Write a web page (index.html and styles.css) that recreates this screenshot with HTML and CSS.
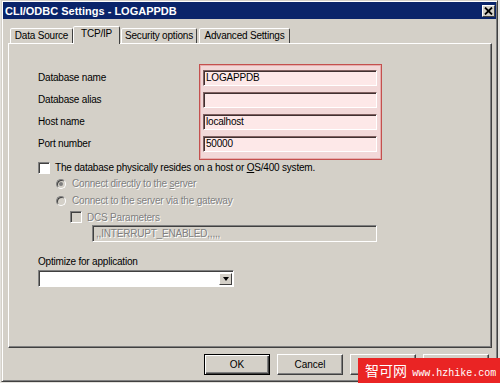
FILE: index.html
```html
<!DOCTYPE html>
<html lang="en">
<head>
  <meta charset="UTF-8" />
  <title>CLI/ODBC Settings - LOGAPPDB</title>
  <link rel="stylesheet" href="styles.css">
</head>
<body>
  <div class="window">
    <div class="titlebar">
      <span class="title">CLI/ODBC Settings - LOGAPPDB</span>
      <span class="close">
        <svg width="9" height="8" viewBox="0 0 9 8"><path d="M1 0.5 L8 7.5 M8 0.5 L1 7.5" stroke="#000" stroke-width="1.8"/></svg>
      </span>
    </div>

    <div class="tabs">
      <div class="tab tab-data">Data Source</div>
      <div class="tab active">TCP/IP</div>
      <div class="tab tab-sec">Security options</div>
      <div class="tab tab-adv">Advanced Settings</div>
    </div>

    <div class="panel">
      <div class="conn">
        <div class="labels">
          <div>Database name</div>
          <div>Database alias</div>
          <div>Host name</div>
          <div>Port number</div>
        </div>
        <div class="fields">
          <div class="field">LOGAPPDB</div>
          <div class="field"></div>
          <div class="field">localhost</div>
          <div class="field">50000</div>
        </div>
      </div>

      <div class="row row-host">
        <span class="check"></span>
        <span>The database physically resides on a host or <u>O</u>S/400 system.</span>
      </div>
      <div class="row row-radio disabled">
        <span class="radio on"></span>
        <span>Connect directly to the <u>s</u>erver</span>
      </div>
      <div class="row row-radio disabled">
        <span class="radio"></span>
        <span>Connect to the server via the <u>g</u>ateway</span>
      </div>
      <div class="row row-dcs disabled">
        <span class="check off"></span>
        <span>DCS Parameters</span>
      </div>
      <div class="dcs">,,INTERRUPT_ENABLED,,,,,</div>

      <div class="opt-label">Optimize for application</div>
      <div class="select"><span class="drop"><span class="arrow"></span></span></div>
    </div>

    <div class="buttons">
      <button class="btn default">OK</button>
      <button class="btn">Cancel</button>
      <button class="btn"></button>
      <button class="btn"></button>
    </div>
  </div>

  <div class="watermark">智可网 <span class="site">www.hzhike.com</span></div>
</body>
</html>
```

FILE: styles.css
```css
body {
  margin: 0;
  background: #e4e2de;
  font-family: "Liberation Sans", Arial, sans-serif;
  font-size: 10px;
  letter-spacing: -0.2px;
  color: #000;
  overflow: hidden;
}
.window {
  margin-left: 1px;
  width: 497px;
  height: 382px;
  box-sizing: border-box;
  background: #d4d0c8;
  border: 1px solid;
  border-color: #d4d0c8 #404040 #404040 #d4d0c8;
  box-shadow: inset 1px 1px #fff, inset -1px -1px #808080;
  padding: 1px;
}
.titlebar {
  height: 17px;
  background: #0a246a;
  display: flex;
  align-items: center;
  justify-content: space-between;
  padding: 0 1px 0 2px;
}
.title {
  color: #fff;
  font-weight: bold;
  font-size: 11px;
  letter-spacing: 0;
}
.close {
  width: 13px;
  height: 12px;
  box-sizing: border-box;
  background: #d4d0c8;
  border: 1px solid;
  border-color: #fff #404040 #404040 #fff;
  display: flex;
  align-items: center;
  justify-content: center;
}

/* tabs */
.tabs {
  display: flex;
  align-items: flex-end;
  margin-top: 7px;
  padding-left: 7px;
  height: 17px;
  position: relative;
  z-index: 1;
}
.tab {
  height: 15px;
  box-sizing: border-box;
  border: 1px solid;
  border-bottom: none;
  border-color: #fff #404040 transparent #fff;
  border-radius: 2px 2px 0 0;
  line-height: 14px;
  text-align: center;
  background: #d4d0c8;
}
.tab-data { width: 63px; }
.tab.active {
  width: 47px;
  height: 18px;
  margin-bottom: -1px;
  padding-bottom: 2px;
}
.tab-sec { width: 76px; margin-left: 1px; }
.tab-adv { width: 91px; margin-left: 2px; }

/* panel */
.panel {
  margin-left: 5px;
  width: 484px;
  height: 305px;
  box-sizing: border-box;
  border: 1px solid;
  border-color: #fff #404040 #404040 #fff;
  box-shadow: inset -1px -1px #808080;
  padding: 20px 0 0 29px;
}
.conn {
  display: flex;
}
.labels {
  width: 161px;
  padding-top: 6px;
}
.labels div {
  height: 16px;
  line-height: 16px;
  margin-bottom: 6px;
}
.fields {
  width: 183px;
  box-sizing: border-box;
  background: #f2d8d8;
  border: 1px solid #c4504e;
  box-shadow: inset 0 0 0 1px #e6aeae;
  padding: 5px 4px 7px 3px;
}
.field {
  height: 16px;
  box-sizing: border-box;
  background: #fde8e8;
  border: 1px solid;
  border-color: #806060 #fff #fff #806060;
  box-shadow: inset 1px 1px #403030;
  margin-bottom: 6px;
  padding-left: 2px;
  line-height: 14px;
}
.field:last-child {
  margin-bottom: 0;
}

/* options */
.row {
  display: flex;
  align-items: center;
}
.row-host {
  height: 15px;
  gap: 5px;
}
.row-radio {
  height: 17px;
  padding-left: 18px;
  gap: 6px;
}
.row-dcs {
  height: 16px;
  padding-left: 32px;
  gap: 5px;
}
.disabled {
  color: #808080;
  text-shadow: 1px 1px 0 #fff;
}
.check {
  width: 12px;
  height: 12px;
  box-sizing: border-box;
  background: #fff;
  border: 1px solid;
  border-color: #808080 #fff #fff #808080;
  box-shadow: inset 1px 1px #404040;
  flex: none;
}
.check.off {
  background: #d4d0c8;
}
.radio {
  width: 10px;
  height: 10px;
  box-sizing: border-box;
  border-radius: 50%;
  background: #d4d0c8;
  border: 1px solid;
  border-color: #808080 #fff #fff #808080;
  box-shadow: inset 1px 1px #404040;
  flex: none;
  display: flex;
  align-items: center;
  justify-content: center;
}
.radio.on::after {
  content: "";
  width: 4px;
  height: 4px;
  border-radius: 50%;
  background: #808080;
}
.dcs {
  margin-left: 54px;
  width: 285px;
  height: 17px;
  box-sizing: border-box;
  border: 1px solid;
  border-color: #808080 #fff #fff #808080;
  box-shadow: inset 1px 1px #404040;
  color: #808080;
  text-shadow: 1px 1px 0 #fff;
  padding-left: 3px;
  line-height: 15px;
}
.opt-label {
  margin-top: 12px;
  height: 16px;
  line-height: 16px;
}
.select {
  width: 196px;
  height: 17px;
  box-sizing: border-box;
  background: #fff;
  border: 1px solid;
  border-color: #808080 #fff #fff #808080;
  box-shadow: inset 1px 1px #404040;
  display: flex;
  justify-content: flex-end;
  padding: 2px 1px 1px 2px;
}
.drop {
  width: 13px;
  height: 12px;
  box-sizing: border-box;
  background: #d4d0c8;
  border: 1px solid;
  border-color: #fff #404040 #404040 #fff;
  display: flex;
  align-items: center;
  justify-content: center;
}
.arrow {
  width: 0;
  height: 0;
  border-left: 3px solid transparent;
  border-right: 3px solid transparent;
  border-top: 4px solid #000;
}

/* buttons */
.buttons {
  display: flex;
  gap: 7px;
  margin-top: 6px;
  padding-left: 201px;
}
.btn {
  width: 66px;
  height: 21px;
  box-sizing: border-box;
  background: #d4d0c8;
  border: 1px solid;
  border-color: #fff #404040 #404040 #fff;
  box-shadow: inset -1px -1px #808080;
  font-family: "Liberation Sans", Arial, sans-serif;
  font-size: 10px;
  padding: 0;
}
.btn.default {
  border-color: #000;
  box-shadow: inset 1px 1px #fff, inset -1px -1px #404040, inset -2px -2px #808080;
}

.watermark {
  position: absolute;
  left: 358px;
  top: 358px;
  width: 142px;
  height: 25px;
  background: #ea2424;
  color: #fff;
  font-family: "Noto Sans CJK SC", sans-serif;
  font-size: 14px;
  letter-spacing: 0;
  line-height: 25px;
  padding-left: 7px;
  box-sizing: border-box;
  white-space: nowrap;
}
.site {
  font-family: "Liberation Mono", monospace;
  font-size: 10px;
  margin-left: 2px;
}
```
